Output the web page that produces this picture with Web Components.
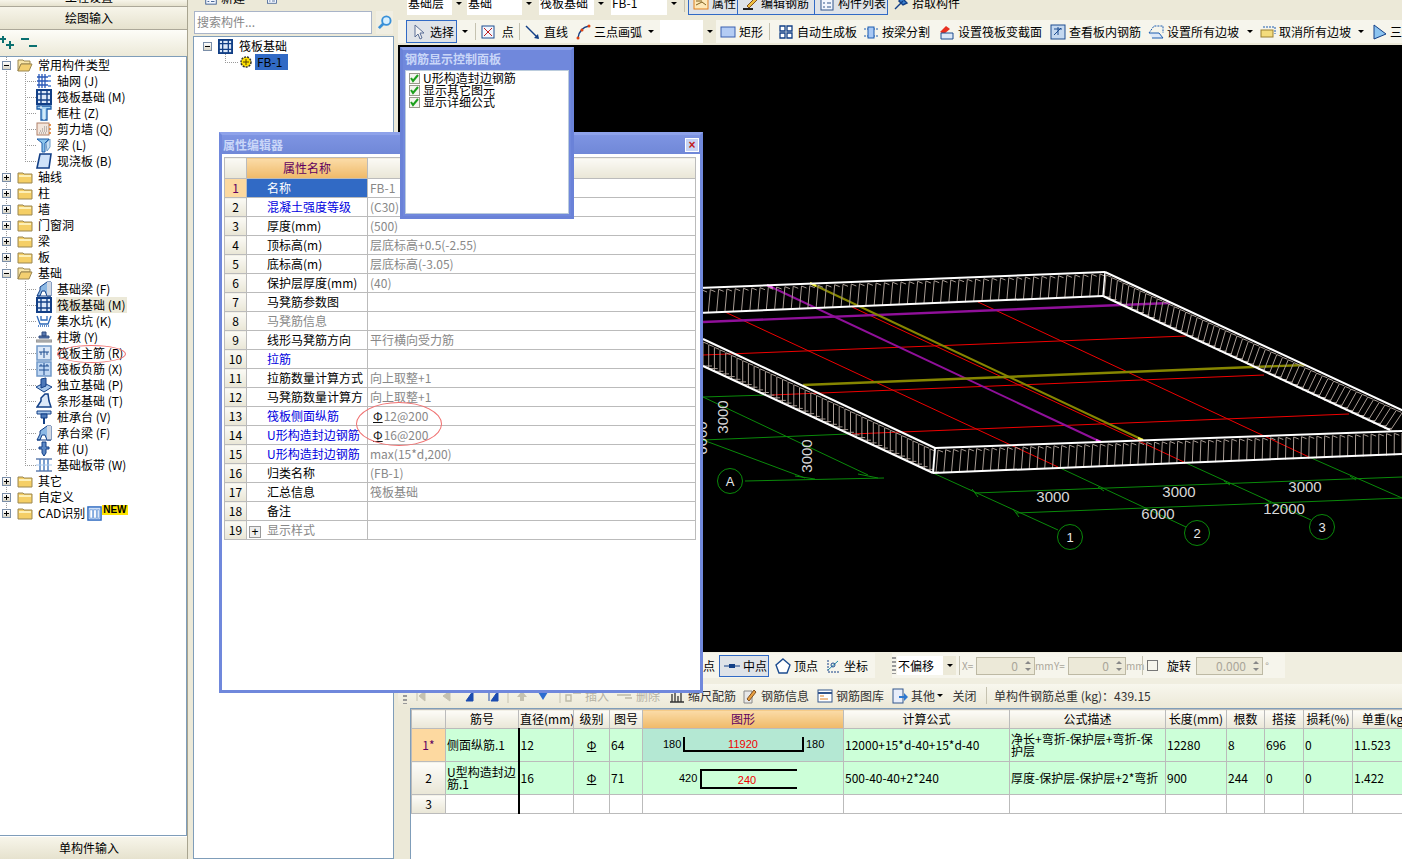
<!DOCTYPE html>
<html lang="zh">
<head>
<meta charset="utf-8">
<title>钢筋</title>
<style>
    html, body { margin: 0; height: 100%; overflow: hidden; background: #ece9d8; }
    body { font: 12px/16px "Noto Sans CJK SC", "Liberation Sans", sans-serif; color: #000; }
</style>
</head>
<body>
<app-shell>
    <side-panel slot="left">
        <tree-row level="0" open icon="folderopen">常用构件类型</tree-row>
        <tree-row level="1" icon="grid">轴网 (J)</tree-row>
        <tree-row level="1" icon="raft">筏板基础 (M)</tree-row>
        <tree-row level="1" icon="column">框柱 (Z)</tree-row>
        <tree-row level="1" icon="wall">剪力墙 (Q)</tree-row>
        <tree-row level="1" icon="beam">梁 (L)</tree-row>
        <tree-row level="1" last icon="slab">现浇板 (B)</tree-row>
        <tree-row level="0" icon="folder">轴线</tree-row>
        <tree-row level="0" icon="folder">柱</tree-row>
        <tree-row level="0" icon="folder">墙</tree-row>
        <tree-row level="0" icon="folder">门窗洞</tree-row>
        <tree-row level="0" icon="folder">梁</tree-row>
        <tree-row level="0" icon="folder">板</tree-row>
        <tree-row level="0" open icon="folderopen">基础</tree-row>
        <tree-row level="1" icon="fbeam">基础梁 (F)</tree-row>
        <tree-row level="1" selected icon="raft">筏板基础 (M)</tree-row>
        <tree-row level="1" icon="sump">集水坑 (K)</tree-row>
        <tree-row level="1" icon="pier">柱墩 (Y)</tree-row>
        <tree-row level="1" ring icon="rmain">筏板主筋 (R)</tree-row>
        <tree-row level="1" icon="rneg">筏板负筋 (X)</tree-row>
        <tree-row level="1" icon="iso">独立基础 (P)</tree-row>
        <tree-row level="1" icon="strip">条形基础 (T)</tree-row>
        <tree-row level="1" icon="cap">桩承台 (V)</tree-row>
        <tree-row level="1" icon="fbeam">承台梁 (F)</tree-row>
        <tree-row level="1" icon="pile">桩 (U)</tree-row>
        <tree-row level="1" last icon="band">基础板带 (W)</tree-row>
        <tree-row level="0" icon="folder">其它</tree-row>
        <tree-row level="0" icon="folder">自定义</tree-row>
        <tree-row level="0" end icon="folder" badge>CAD识别</tree-row>
    </side-panel>
    <part-list slot="middle"></part-list>
    <main-area slot="right"></main-area>
</app-shell>
<prop-dialog></prop-dialog>
<rebar-panel></rebar-panel>

<script>
const ICONS = {
    folder: '<path d="M1 4h5l1 1h8v9H1z" fill="#f5cf66" stroke="#9a8650"/><path d="M2 6h12v2H2z" fill="#fdf0b8"/>',
    folderopen: '<path d="M1 3h5l1 1h6v3H4l-3 7z" fill="#f9e6a8" stroke="#9a8650"/><path d="M4 7h11l-3 7H1z" fill="#f3cf70" stroke="#9a8650"/>',
    grid: '<path d="M3 1v14M6 1v14M9 1v14M1 4h11M1 8h11M1 12h11" stroke="#2858b8" stroke-width="1.3" fill="none"/><path d="M12 2h3v2h-3zM12 7h3v2h-3zM12 12h3v2h-3z" fill="#78a0e0"/>',
    raft: '<rect x="1" y="1" width="14" height="14" fill="#dce8f8" stroke="#123f86" stroke-width="2"/><path d="M5 1v14M11 1v14M1 5h14M1 11h14" stroke="#123f86" stroke-width="1.4"/>',
    column: '<path d="M1 1h14v3H11v11H5V4H1z" fill="#a8d4f2" stroke="#1c5ca8" stroke-width="1.3"/><path d="M5 1v3M8 4v11" stroke="#fff"/>',
    wall: '<rect x="1" y="2" width="12" height="12" fill="#f4e6dc" stroke="#b08068"/><path d="M3 12h8M4 10h7M6 8h5M8 6h3" stroke="#888" stroke-dasharray="1 1"/><path d="M13 4h2M13 8h2M13 12h2" stroke="#e07820" stroke-width="1.4"/>',
    beam: '<path d="M1 2h12l-4 4v9H6V6z" fill="#8cc4ec" stroke="#1c5ca8"/><path d="M10 6l4-4v8l-3 4z" fill="#c8e0f4" stroke="#6c9cc8"/>',
    slab: '<path d="M4 1h11l-2 14H1z" fill="#cfe2f8" stroke="#123f86" stroke-width="1.6"/>',
    fbeam: '<path d="M1 15l3-6V6l7-5h4v14h-4l-2-5H6l-2 5z" fill="#8cb8e4" stroke="#123f86"/><path d="M11 1h4v14h-4z" fill="#d0d8e4"/><path d="M1 15h14" stroke="#123f86"/>',
    sump: '<path d="M1 3l3 8h8l3-8M5 3v4h6V3" fill="none" stroke="#2c68b8" stroke-width="1.3"/><path d="M2 13h12" stroke="#2c68b8" stroke-dasharray="1 1" stroke-width="1.5"/>',
    pier: '<path d="M6 3h4v4H6zM3 7h10v2H3z" fill="#5878b0" stroke="#304c80"/><path d="M0 11h16v2H0z" fill="#c8c8c8" stroke="#888"/>',
    rmain: '<rect x="1" y="1" width="14" height="14" fill="#dce8f8" stroke="#7098c8" stroke-width="1.5"/><path d="M8 3v10M3 7h10M5 7v3M11 7v3" stroke="#1c4c90" fill="none"/>',
    rneg: '<rect x="1" y="1" width="14" height="14" fill="#c0d8f4" stroke="#7098c8" stroke-width="1.5"/><path d="M8 2v12M3 5h10M3 9h10M5 3v2M11 3v2" stroke="#1c4c90" fill="none"/>',
    iso: '<path d="M0 10l8-4 8 4-8 5z" fill="#a8c8ec" stroke="#123f86"/><path d="M5 2l5-1v8l-5 2z" fill="#4c78b8" stroke="#123f86"/>',
    strip: '<path d="M1 14l4-6V5l4-4h3l1 7 2 6z" fill="#dce8f8" stroke="#123f86" stroke-width="1.5"/>',
    cap: '<path d="M1 2h14v3H1z" fill="#a8c8ec" stroke="#123f86"/><path d="M5 5h6v4H5z" fill="#4c78b8" stroke="#123f86"/><path d="M8 9v6" stroke="#123f86" stroke-width="2"/>',
    pile: '<path d="M6 1h4v5h3v2h-3v4l-2 3-2-3V8H3V6h3z" fill="#5c88c4" stroke="#123f86"/>',
    band: '<path d="M0 2h16M0 14h16" stroke="#123f86"/><path d="M4 2v12M8 2v12M12 2v12" stroke="#5080c0" stroke-width="1.5"/><path d="M0 8h16" stroke="#a8c8ec"/>',
    gear: '<circle cx="8" cy="8" r="5" fill="#ffe000" stroke="#333" stroke-dasharray="2 1" stroke-width="1.5"/><path d="M5 8h6M8 5v6" stroke="#554400"/>',
    cadi: '<rect x="1" y="1" width="14" height="14" fill="#cfe0f8" stroke="#2c68c0" stroke-width="1.5"/><path d="M3 4h3v9H3zM7 4h3v9H7zM11 4h2v9h-2z" fill="#fff" stroke="#5088d0" stroke-width=".7"/>',
    pointer: '<path d="M4 1v12l3-3 2 5 2-1-2-5h4z" fill="#f2f2f2" stroke="#5a6e96"/>',
    point: '<rect x="2" y="2" width="12" height="12" fill="#f2f6fe" stroke="#1c4c90"/><path d="M4 4l8 8M12 4l-8 8" stroke="#c02020"/>',
    line: '<path d="M1 2l12 12" stroke="#123f86" stroke-width="1.4"/><path d="M14 15l-5-1 4-4z" fill="#123f86"/>',
    arc: '<path d="M3 14C4 7 8 3 14 2" stroke="#123f86" stroke-width="1.4" fill="none"/><circle cx="3" cy="14" r="1.5" fill="#e04010"/><circle cx="7" cy="6" r="1.5" fill="#e04010"/><circle cx="14" cy="2" r="1.5" fill="#e04010"/>',
    rect: '<rect x="1" y="3" width="14" height="10" fill="#b4ccf4" stroke="#3a60b0"/>',
    auto: '<path d="M2 2h5v5H2zM9 2h5v5H9zM2 9h5v5H2zM9 9h5v5H9z" fill="#fff" stroke="#123f86" stroke-width="1.3"/>',
    split: '<path d="M1 5h14M1 12h14" stroke="#1c5cb0" stroke-dasharray="2 1"/><rect x="5" y="3" width="6" height="11" fill="#a8c8f4" stroke="#1c5cb0"/>',
    setvar: '<path d="M1 8l6-6 4 3-6 5z" fill="#e83020"/><path d="M2 9h12v6H2z" fill="#dce8f8" stroke="#1c4c90"/>',
    board: '<rect x="1" y="1" width="14" height="14" fill="#c4d8f0" stroke="#1c4c90"/><path d="M4 5h8M8 3v8M4 11l7-7" stroke="#1c4c90"/>',
    slope: '<path d="M1 9l5-7h9v7" fill="none" stroke="#1c5cb0" stroke-dasharray="2 1"/><path d="M1 9h10l4 5H4" fill="#dce8f8" stroke="#1c5cb0"/>',
    noslope: '<rect x="1" y="6" width="12" height="7" fill="#f4dc7c" stroke="#9a8030"/><path d="M3 3h12v7" fill="none" stroke="#1c5cb0" stroke-dasharray="2 1"/>',
    tri: '<path d="M3 1v14l12-5z" fill="#8cc4f0" stroke="#123f86"/>',
    prop: '<rect x="1" y="2" width="14" height="12" fill="#fde8b8" stroke="#e08020"/><path d="M3 6h6M3 10l6-3 4 3" stroke="#806020" fill="none"/>',
    edit: '<path d="M1 14h10" stroke="#222" stroke-width="2"/><path d="M5 11l8-8 2 2-8 8z" fill="#f0c040" stroke="#805020"/>',
    list: '<rect x="2" y="1" width="12" height="14" fill="#f2f6fe" stroke="#33568c"/><path d="M4 4h2M8 4h4M4 8h2M8 8h4M4 12h2M8 12h4" stroke="#33568c"/>',
    pick: '<path d="M2 14l8-8M8 2l6 6-4 2-4-4z" fill="#3a80d0" stroke="#123f86" stroke-width="1.4"/>',
    mid: '<path d="M0 8h16" stroke="#123f86"/><rect x="5" y="6" width="6" height="4" fill="#123f86"/>',
    vertex: '<path d="M8 1l7 6-3 8H4L1 7z" fill="#fff" stroke="#1c4c90" stroke-width="1.4"/>',
    coord: '<path d="M3 2v12h12" fill="none" stroke="#123f86" stroke-dasharray="2 1"/><path d="M3 12L13 3" stroke="#1c8ca8"/><circle cx="8" cy="7" r="2" fill="none" stroke="#1c4c90"/>',
    info: '<path d="M2 3h8v12H2z" fill="#e8e8e8" stroke="#888"/><path d="M5 11l7-9 2 2-7 9z" fill="#e8a040" stroke="#805020"/>',
    lib: '<rect x="1" y="2" width="14" height="12" fill="#fff" stroke="#33568c"/><path d="M1 5h14" stroke="#33568c" stroke-width="2"/><path d="M3 8h4M3 11h8" stroke="#e08020"/>',
    other: '<rect x="1" y="1" width="10" height="14" fill="#e8eefa" stroke="#33568c"/><path d="M7 8h5V5l4 4-4 4v-3H7z" fill="#2c78d0"/>',
    scale: '<path d="M1 14h14M3 14V6M6 14V3M9 14V8M12 14V5" stroke="#333" stroke-width="1.3"/>',
    search: '<circle cx="10" cy="6" r="4.5" fill="#d8f0ff" stroke="#3890d8" stroke-width="2"/><path d="M7 9l-5 5" stroke="#3890d8" stroke-width="3"/>'
};

function icon(name, size = 16) {
    return `<svg width="${size}" height="${size}" viewBox="0 0 16 16" style="flex:none;display:block">${ICONS[name] || ''}</svg>`;
}

class AppShell extends HTMLElement {
    constructor() {
        super();
        this.attachShadow({mode: 'open'});
        this.shadowRoot.innerHTML = `
            <style>
                :host { display: grid; grid-template-columns: 188px 202px 1004px; column-gap: 4px; width: 1402px; height: 859px; overflow: hidden; }
                ::slotted([slot="middle"]) { margin-left: 1px; }
            </style>
            <slot name="left"></slot>
            <slot name="middle"></slot>
            <slot name="right"></slot>
        `;
    }
}

class SidePanel extends HTMLElement {
    constructor() {
        super();
        this.attachShadow({mode: 'open'});
        this.shadowRoot.innerHTML = `
            <style>
                :host { display: flex; flex-direction: column; height: 859px; border-right: 1px solid #a8a490; box-sizing: border-box; }
                .tab { height: 23px; line-height: 22px; text-align: center; box-sizing: border-box; flex: none; padding-right: 9px;
                    background: linear-gradient(#f7f5ea, #e6e2ce); border-bottom: 1px solid #aca899; }
                .cut { height: 7px; overflow: hidden; }
                .cut span { display: block; margin-top: -14px; }
                .tools { height: 26px; flex: none; display: flex; gap: 5px; align-items: center; padding: 0 0 2px 0;
                    background: linear-gradient(#fdfdf8, #ece9d8); box-sizing: border-box; }
                .box { flex: 1; border: 1px solid #7f9db9; border-left: 0; background: #fff; overflow: hidden; min-height: 0; }
            </style>
            <div class="tab cut"><span>工程设置</span></div>
            <div class="tab">绘图输入</div>
            <div class="tools">
                <svg width="15" height="15" viewBox="0 0 15 15"><path d="M3 1v7M0 4h6M10 6v8M6 10h8" stroke="#0a7070" stroke-width="2"/></svg>
                <svg width="18" height="15" viewBox="0 0 18 15"><path d="M1 4h8M9 11h8" stroke="#0a7070" stroke-width="2"/></svg>
            </div>
            <div class="box"><slot></slot></div>
            <div class="tab" style="border-top:1px solid #fff;border-bottom:0">单构件输入</div>
        `;
    }
}

class TreeRow extends HTMLElement {
    constructor() {
        super();
        this.attachShadow({mode: 'open'});
    }

    connectedCallback() {
        const level = this.getAttribute('level');
        const dot = 'repeating-linear-gradient(to bottom,#999 0 1px,transparent 1px 2px)';
        const dash = 'repeating-linear-gradient(to right,#999 0 1px,transparent 1px 2px)';
        let bg = `${dot} 6px 0/1px ${this.hasAttribute('end') ? '8px' : '100%'} no-repeat`;
        if (level === '1') {
            bg += `,${dot} 25px 0/1px ${this.hasAttribute('last') ? '8px' : '100%'} no-repeat,${dash} 25px 8px/11px 1px no-repeat`;
        }
        const box = level === '0' ? `<span class="exp">${this.hasAttribute('open') ? '' : '<i></i>'}</span>` : '';
        this.shadowRoot.innerHTML = `
            <style>
                :host { display: flex; align-items: center; height: 16px; background: ${bg}; white-space: nowrap; position: relative; }
                .exp { width: 9px; height: 9px; margin: 0 6px 0 2px; flex: none; border: 1px solid #7a8ea8; box-sizing: border-box;
                    background: linear-gradient(#fff, #d8d4c4); }
                .exp::before { content: ""; display: block; height: 1px; margin: 3px 1px 0; background: #000; }
                .exp i { display: block; width: 1px; height: 5px; background: #000; margin: -3px 0 0 3px; }
                .ind { width: 36px; flex: none; }
                .lab { margin-left: 4px; padding: 0 1px; }
                :host([selected]) .lab { background: #ece9d8; }
                .ring { position: absolute; left: 57px; top: 0; width: 69px; height: 18px; border: 1px solid #f07070; border-radius: 50%; box-sizing: border-box; }
                .cad { margin-left: 1px; }
                .new { font: bold 10px/10px "Liberation Sans", sans-serif; color: #000; background: #ffe400; padding: 0 1px; align-self: flex-start; }
            </style>
            ${box}${level === '1' ? '<span class="ind"></span>' : ''}
            ${icon(this.getAttribute('icon'), 16)}
            <span class="lab"><slot></slot></span>
            ${this.hasAttribute('ring') ? '<span class="ring"></span>' : ''}
            ${this.hasAttribute('badge') ? `<span class="cad">${icon('cadi', 15)}</span><span class="new">NEW</span>` : ''}
        `;
    }
}

class PartList extends HTMLElement {
    constructor() {
        super();
        this.attachShadow({mode: 'open'});
        this.shadowRoot.innerHTML = `
            <style>
                :host { display: flex; flex-direction: column; height: 859px; }
                .top { height: 11px; flex: none; overflow: hidden; }
                .top div { display: flex; align-items: center; gap: 3px; margin-top: -10px; padding-left: 11px; height: 16px; }
                .find { display: flex; height: 23px; flex: none; align-items: stretch; gap: 4px; padding-left: 1px; }
                .input { width: 174px; border: 1px solid #a9b4c8; background: #fff; color: #888; line-height: 19px; padding-left: 2px; height: 21px; }
                .go { width: 17px; display: flex; align-items: center; justify-content: center; background: #f0eee2; }
                .box { flex: 1; margin-top: 2px; border: 1px solid #7f9db9; background: #fff; padding: 1px 0 0 7px; }
                .row { display: flex; align-items: center; height: 16px; gap: 6px; }
                .exp { width: 9px; height: 9px; border: 1px solid #7a8ea8; box-sizing: border-box; background: linear-gradient(#fff, #d8d4c4); margin-left: 2px; }
                .exp::before { content: ""; display: block; height: 1px; margin: 3px 1px 0; background: #000; }
                .sub { padding-left: 37px; gap: 1px;
                    background: repeating-linear-gradient(to right,#999 0 1px,transparent 1px 2px) 24px 8px/13px 1px no-repeat,
                        repeating-linear-gradient(to bottom,#999 0 1px,transparent 1px 2px) 24px 0/1px 8px no-repeat; }
                .sub span { background: #316ac5; color: #000; padding: 0 6px 0 2px; }
            </style>
            <div class="top"><div>${icon('list', 14)}<span style="width:42px">新建</span>${icon('list', 12)}</div></div>
            <div class="find">
                <div class="input">搜索构件...</div>
                <div class="go">${icon('search', 15)}</div>
            </div>
            <div class="box">
                <div class="row"><i class="exp"></i>${icon('raft', 15)}<b style="font-weight:400">筏板基础</b></div>
                <div class="row sub">${icon('gear', 16)}<span>FB-1</span></div>
            </div>
        `;
    }
}

class ToolItem extends HTMLElement {
    constructor() {
        super();
        this.attachShadow({mode: 'open'});
    }

    connectedCallback() {
        const w = this.getAttribute('w');
        const name = this.getAttribute('icon');
        this.shadowRoot.innerHTML = `
            <style>
                :host { display: flex; align-items: center; gap: 3px; box-sizing: border-box; height: 100%; padding: 0 2px; white-space: nowrap; flex: none; overflow: hidden; ${w ? `width:${w}px;` : ''} }
                :host([active]) { background: #dfe3e8; border: 1px solid #316ac5; padding: 0 4px; }
                :host([center]) { justify-content: center; }
            </style>
            ${name ? icon(name) : ''}<slot></slot>
        `;
    }
}

class ToolCaret extends HTMLElement {
    constructor() {
        super();
        this.attachShadow({mode: 'open'});
        this.shadowRoot.innerHTML = `
            <style>
                :host { display: flex; align-items: center; justify-content: center; flex: none; height: 100%; width: var(--w, 15px); }
                i { width: 0; height: 0; border: 3px solid transparent; border-top: 3px solid #000; border-bottom: 0; }
            </style><i></i>
        `;
    }
}

class ToolSep extends HTMLElement {
    constructor() {
        super();
        this.attachShadow({mode: 'open'});
        this.shadowRoot.innerHTML = `
            <style>
                :host { display: flex; justify-content: center; flex: none; height: 100%; width: var(--w, 7px); }
                i { width: 1px; background: #c5c2b0; margin: 3px 0; }
            </style><i></i>
        `;
    }
}

class ComboBox extends HTMLElement {
    constructor() {
        super();
        this.attachShadow({mode: 'open'});
    }

    connectedCallback() {
        this.shadowRoot.innerHTML = `
            <style>
                :host { display: flex; flex: none; height: 100%; background: #fff; width: ${this.getAttribute('w')}px; box-sizing: border-box; align-items: center; padding-left: 1px; margin: 0 ${this.getAttribute('mr') || 0}px 0 ${this.getAttribute('ml') || 0}px; }
                span { flex: 1; white-space: nowrap; overflow: hidden; }
                b { width: 13px; height: 100%; background: #ece9d8; display: flex; align-items: center; justify-content: center; }
                i { width: 0; height: 0; border: 3px solid transparent; border-top: 3px solid #000; border-bottom: 0; }
            </style>
            <span><slot></slot></span><b><i></i></b>
        `;
    }
}

class SpinBox extends HTMLElement {
    constructor() {
        super();
        this.attachShadow({mode: 'open'});
    }

    connectedCallback() {
        this.shadowRoot.innerHTML = `
            <style>
                :host { display: flex; flex: none; width: ${this.getAttribute('w')}px; height: 18px; border: 1px solid #bdb9a4; box-sizing: border-box; color: #aaa69a; align-items: center; background: #ece9d8; }
                span { flex: 1; text-align: right; padding-right: 3px; }
                b { width: 13px; display: flex; flex-direction: column; gap: 4px; align-items: center; }
                i { width: 0; height: 0; border: 3px solid transparent; border-bottom: 3px solid #888; border-top: 0; }
                i + i { border-bottom: 0; border-top: 3px solid #888; }
            </style>
            <span><slot></slot></span><b><i></i><i></i></b>
        `;
    }
}

class MainArea extends HTMLElement {
    constructor() {
        super();
        this.attachShadow({mode: 'open'});
        this.shadowRoot.innerHTML = `
            <style>
                :host { display: flex; flex-direction: column; height: 859px; width: 1004px; overflow: hidden; }
                .bar { display: flex; align-items: center; flex: none; white-space: nowrap; }
                .r1 { height: 24px; margin-top: -9px; padding-left: 9px; }
                .r2 { height: 23px; margin-top: 5px; padding-left: 8px; background: #f6f5ec; }
                .r3 { height: 32px; background: #f0eee0; padding: 1px 0 6px; box-sizing: border-box; }
                .r4 { height: 23px; background: linear-gradient(#f8f7ee, #ece9d8); padding-left: 5px; color: #333; }
                .grip { width: 4px; height: 17px; flex: none; background: repeating-linear-gradient(to bottom,#999 0 2px,transparent 2px 4px); }
                .snap { height: 25px; display: flex; align-items: center; background: #f6f5ec; flex: none; }
                .snap tool-item { height: 22px; }
                .dim { color: #aaa69a; flex: none; font-size: 10px; }
                .box { width: 11px; height: 11px; border: 1px solid #777; flex: none; box-sizing: border-box; margin-left: 2px; }
                .faded { color: #b5b2a4; flex: none; }
                cad-view { flex: none; margin-top: 2px; }
                rebar-table { margin: 1px 0 0 12px; flex: 1; min-height: 0; }
            </style>
            <div class="bar r1">
                <combo-box w="58" mr="2">基础层</combo-box>
                <combo-box w="68" mr="4">基础</combo-box>
                <combo-box w="68" mr="4">筏板基础</combo-box>
                <combo-box w="69">FB-1</combo-box>
                <tool-sep style="--w:8px"></tool-sep>
                <tool-item w="50" active icon="prop">属性</tool-item>
                <tool-item w="77" active icon="edit" style="border-left:0">编辑钢筋</tool-item>
                <tool-item w="73" active icon="list" style="border-left:0">构件列表</tool-item>
                <tool-item w="78" style="margin-left:3px" icon="pick">拾取构件</tool-item>
            </div>
            <div class="bar r2">
                <tool-item w="51" active icon="pointer">选择</tool-item>
                <tool-caret></tool-caret>
                <tool-sep style="--w:6px"></tool-sep>
                <tool-item w="38" icon="point">&nbsp;点</tool-item>
                <tool-sep></tool-sep>
                <tool-item w="50" icon="line">直线</tool-item>
                <tool-item w="70" icon="arc">三点画弧</tool-item>
                <tool-caret></tool-caret>
                <combo-box w="56" ml="2" mr="2"></combo-box>
                <tool-item w="45" icon="rect">矩形</tool-item>
                <tool-sep style="--w:13px"></tool-sep>
                <tool-item w="85" icon="auto">自动生成板</tool-item>
                <tool-item w="76" icon="split">按梁分割</tool-item>
                <tool-item w="111" icon="setvar">设置筏板变截面</tool-item>
                <tool-item w="98" icon="board">查看板内钢筋</tool-item>
                <tool-item w="96" icon="slope">设置所有边坡</tool-item>
                <tool-caret style="--w:16px"></tool-caret>
                <tool-item w="95" icon="noslope">取消所有边坡</tool-item>
                <tool-caret style="--w:16px"></tool-caret>
                <tool-item w="40" icon="tri">三</tool-item>
            </div>
            <cad-view></cad-view>
            <div class="bar r3">
                <div class="snap" style="padding-left:303px">
                    <tool-item w="18">点</tool-item>
                    <tool-item w="50" active icon="mid">中点</tool-item>
                    <tool-item w="46" style="margin-left:4px" icon="vertex">顶点</tool-item>
                    <tool-item w="52" style="margin-left:4px" icon="coord">坐标</tool-item>
                </div>
                <div class="snap" style="margin-left:17px;padding-right:16px">
                    <span class="grip" style="margin-right:1px"></span>
                    <combo-box w="59" style="height:19px">不偏移</combo-box>
                    <tool-sep style="--w:6px"></tool-sep>
                    <span class="dim" style="width:14px">X=</span>
                    <spin-box w="59">0</spin-box>
                    <span class="dim" style="width:19px">mm</span>
                    <span class="dim" style="width:14px">Y=</span>
                    <spin-box w="58">0</spin-box>
                    <span class="dim" style="width:14px">mm</span>
                    <tool-sep style="--w:5px"></tool-sep>
                    <span class="box"></span>
                    <span style="margin:0 5px 0 9px;flex:none">旋转</span>
                    <spin-box w="67">0.000</spin-box>
                    <span class="dim">&nbsp;°</span>
                </div>
            </div>
            <div class="bar r4">
                <span class="grip"></span>
                <svg width="158" height="14" viewBox="0 0 158 14" style="flex:none">
                    <path d="M10 2v10M12 7l6-5v10zM43 2v10l-7-5z" fill="#c4c1b0" stroke="#c4c1b0"/>
                    <path d="M59 12l7-10v10zM82 2v10M84 12l7-10v10z" fill="#1c4cb0" stroke="#1c4cb0"/>
                    <path d="M101 0v14" stroke="#c5c2b0"/>
                    <path d="M110 8l5-6 5 6h-3v4h-4V8z" fill="#c4c1b0"/>
                    <path d="M131 3h10l-5 8z" fill="#2c6cd0"/>
                    <path d="M153 0v14" stroke="#c5c2b0"/>
                </svg>
                <svg width="20" height="14" viewBox="0 0 20 14" style="flex:none"><path d="M1 6h5v6H1zM8 4h8" fill="none" stroke="#bdbaa8" stroke-width="1.4"/></svg>
                <span class="faded" style="width:31px">插入</span>
                <svg width="20" height="14" viewBox="0 0 20 14" style="flex:none"><path d="M1 6h14M9 9h7" fill="none" stroke="#bdbaa8" stroke-width="1.4"/></svg>
                <span class="faded" style="width:31px">删除</span>
                <tool-item w="73" icon="scale">缩尺配筋</tool-item>
                <tool-item w="75" icon="info">钢筋信息</tool-item>
                <tool-item w="75" icon="lib">钢筋图库</tool-item>
                <tool-item w="46" icon="other">其他</tool-item>
                <tool-caret style="--w:8px"></tool-caret>
                <tool-item w="41" center>关闭</tool-item>
                <tool-sep style="--w:3px"></tool-sep>
                <span style="margin-left:6px">单构件钢筋总重 (kg)：439.15</span>
            </div>
            <rebar-table></rebar-table>
        `;
    }
}

class CadView extends HTMLElement {
    constructor() {
        super();
        this.attachShadow({mode: 'open'});
    }

    connectedCallback() {
        const seg = (x1, y1, x2, y2, c, w = 1) => `<line x1="${x1}" y1="${y1}" x2="${x2}" y2="${y2}" stroke="${c}" stroke-width="${w}"/>`;
        const green = '#0a8a0a', red = '#f00000', white = '#fff', purple = '#90109a', olive = '#868600';

        // thin posts between two slab edges, each with a short serif at its top
        const hatch = (a, b, c, d, n, tick) => {
            let out = '';
            for (let i = 0; i <= n; i++) {
                const t = i / n;
                const x1 = a[0] + (b[0] - a[0]) * t, y1 = a[1] + (b[1] - a[1]) * t;
                const x2 = c[0] + (d[0] - c[0]) * t, y2 = c[1] + (d[1] - c[1]) * t;
                out += `M${(x1 + 5).toFixed(1)} ${(y1 + 2).toFixed(1)}L${x1.toFixed(1)} ${y1.toFixed(1)}L${x2.toFixed(1)} ${y2.toFixed(1)}`;
                if (tick) out += `L${(x2 + tick).toFixed(1)} ${y2.toFixed(1)}`;
            }
            return `<path d="${out}" fill="none" stroke="#a89c94" stroke-width="1"/>`;
        };

        const label = (x, y, t, rot) => `<text x="${x}" y="${y}" fill="#d8d8d8" font-size="15" text-anchor="middle" ${rot ? `transform="rotate(-90 ${x} ${y})"` : ''}>${t}</text>`;
        const bubble = (x, y, t) => `<circle cx="${x}" cy="${y}" r="12.5" fill="#000" stroke="${green}"/><text x="${x}" y="${y + 5}" fill="#e8e8e8" font-size="13" text-anchor="middle">${t}</text>`;

        const parts = [
            seg(745, 481, 884, 478, green), seg(703, 397, 767, 395, green), seg(703, 440, 848, 434, green),
            seg(975, 493, 1402, 477, green), seg(1016, 513, 1402, 498, green),
            seg(703, 397, 868, 475, green), seg(703, 440, 805, 478, green),
            seg(933, 473, 1058, 530, green), seg(1058, 467, 1186, 527, green), seg(1186, 463, 1311, 520, green), seg(1309, 457, 1402, 498, green),
            seg(795, 476, 815, 479, green), seg(858, 474, 878, 478, green), seg(972, 489, 978, 497, green), seg(1013, 509, 1019, 517, green),
            seg(1098, 487, 1104, 491, green), seg(1224, 481, 1230, 485, green), seg(1350, 476, 1356, 480, green), seg(1265, 499, 1271, 503, green),
            seg(725, 312, 1058, 467, red), seg(852, 307, 1186, 463, red), seg(978, 302, 1309, 457, red),
            seg(703, 355, 1186, 336, red), seg(772, 395, 1264, 375, red), seg(852, 434, 1349, 414, red),
            seg(767, 285, 1101, 442, purple, 2), seg(703, 322, 1170, 303, purple, 2.4),
            seg(810, 283, 1143, 440, olive, 2), seg(803, 385, 1305, 365, olive, 2.4),
            seg(767, 285, 773, 288, '#f060f0', 2), seg(1096, 440, 1101, 442, '#f060f0', 2), seg(810, 283, 816, 286, '#f0f040', 2), seg(1138, 438, 1143, 440, '#f0f040', 2),
            hatch([702, 290], [1100, 274], [700, 313], [1098, 297], 48),
            hatch([1106, 275], [1402, 413], [1104, 297], [1390, 431], 52, 7),
            hatch([938, 450], [1402, 433], [936, 473], [1402, 455], 60),
            hatch([703, 342], [930, 449], [703, 366], [930, 472], 40, 9),
            seg(698, 288, 1105, 272, white, 2), seg(698, 313, 1103, 296, white, 2),
            seg(1105, 272, 1404, 411, white, 2), seg(1103, 296, 1390, 430, white, 2),
            seg(703, 339, 935, 448, white, 2), seg(703, 366, 933, 473, white, 2),
            seg(935, 448, 1402, 431, white, 2), seg(933, 473, 1402, 454, white, 2),
            seg(935, 448, 933, 473, white, 2), seg(1105, 272, 1103, 296, white, 1.4),
            label(1053, 502, '3000'), label(1179, 497, '3000'), label(1305, 492, '3000'),
            label(1158, 519, '6000'), label(1284, 514, '12000'),
            label(728, 417, '3000', true), label(812, 456, '3000', true), label(707, 438, '6000', true),
            bubble(730, 481, 'A'), bubble(1070, 537, '1'), bubble(1197, 533, '2'), bubble(1322, 527, '3')
        ];

        this.shadowRoot.innerHTML = `
            <style>
                :host { display: block; width: 1004px; height: 607px; background: #000; }
                svg { display: block; font-family: "Liberation Sans", sans-serif; }
            </style>
            <svg width="1004" height="607" viewBox="398 45 1004 607">${parts.join('')}</svg>
        `;
    }
}

class PropDialog extends HTMLElement {
    constructor() {
        super();
        this.attachShadow({mode: 'open'});
        this.rows = [
            ['名称', 'FB-1', 's'], ['混凝土强度等级', '(C30)', 'b'], ['厚度(mm)', '(500)'], ['顶标高(m)', '层底标高+0.5(-2.55)'],
            ['底标高(m)', '层底标高(-3.05)'], ['保护层厚度(mm)', '(40)'], ['马凳筋参数图', ''], ['马凳筋信息', '', 'g'],
            ['线形马凳筋方向', '平行横向受力筋'], ['拉筋', '', 'b'], ['拉筋数量计算方式', '向上取整+1'], ['马凳筋数量计算方', '向上取整+1'],
            ['筏板侧面纵筋', '<u>Φ</u>12@200', 'b'], ['U形构造封边钢筋', '<u>Φ</u>16@200', 'b'], ['U形构造封边钢筋', 'max(15*d,200)', 'b'],
            ['归类名称', '(FB-1)'], ['汇总信息', '筏板基础'], ['备注', ''], ['显示样式', '', 'p']
        ];
    }

    connectedCallback() {
        const body = this.rows.map((r, i) => `
            <tr class="${r[2] || ''}">
                <th>${i + 1}</th>
                <td class="n">${r[2] === 'p' ? '<i>+</i>' : ''}${r[0]}</td>
                <td class="v">${r[1]}</td>
            </tr>`).join('');
        this.shadowRoot.innerHTML = `
            <style>
                :host { position: absolute; left: 219px; top: 132px; width: 484px; height: 561px; box-sizing: border-box; display: flex; flex-direction: column;
                    background: #fff; border: 3px solid #7088dc; border-top-color: #8ea2ea; }
                .title { height: 19px; flex: none; display: flex; align-items: center; justify-content: space-between; padding: 0 1px;
                    background: linear-gradient(#7e94e2, #7088d8); color: #c9d6f8; font-weight: 700; }
                .title b { width: 14px; height: 14px; background: #c8d4f4; color: #c02020; font: bold 12px/12px "Liberation Sans", sans-serif; text-align: center; border: 1px solid #fff; box-sizing: border-box; }
                .wrap { flex: 1; padding: 3px 4px 3px 2px; background: #fff; position: relative; overflow: hidden; }
                table { border-collapse: collapse; table-layout: fixed; width: 472px; }
                th, td { border: 1px solid #bbb; height: 18px; padding: 0; font-weight: 400; white-space: nowrap; overflow: hidden; line-height: 16px; }
                th { background: linear-gradient(#fbfaf5, #e9e6d6); text-align: center; }
                thead th { height: 20px; }
                thead .gold { background: linear-gradient(#fbdca8, #efb968); color: #600060; }
                .n { padding-left: 20px; }
                .v { padding-left: 2px; color: #888; }
                .v u { color: #111; text-decoration: underline; margin: 0 1px 0 3px; }
                .s .n { background: #316ac5; color: #fff; }
                .s th { background: #fdd9a0; color: #600060; }
                .b .n { color: #0000e0; }
                .g .n, .p .n { color: #888; }
                .p .n { padding-left: 2px; }
                .p i { display: inline-block; width: 12px; height: 12px; border: 1px solid #999; color: #000; font: 12px/10px "Liberation Sans", sans-serif; text-align: center; margin-right: 6px; box-sizing: border-box; background: #eee; vertical-align: -1px; }
                .ring { position: absolute; left: 134px; top: 248px; width: 86px; height: 44px; border: 1px solid #f07070; border-radius: 50%; box-sizing: border-box; }
            </style>
            <div class="title">属性编辑器<b>×</b></div>
            <div class="wrap">
                <table>
                    <colgroup><col style="width:22px"><col style="width:121px"><col></colgroup>
                    <thead><tr><th></th><th class="gold">属性名称</th><th></th></tr></thead>
                    <tbody>${body}</tbody>
                </table>
                <span class="ring"></span>
            </div>
        `;
    }
}

class RebarPanel extends HTMLElement {
    constructor() {
        super();
        this.attachShadow({mode: 'open'});
        const opts = ['U形构造封边钢筋', '显示其它图元', '显示详细公式'];
        this.shadowRoot.innerHTML = `
            <style>
                :host { position: absolute; left: 400px; top: 47px; width: 174px; height: 172px; box-sizing: border-box; display: flex; flex-direction: column;
                    background: #7088dc; border: 3px solid #6a82d8; border-top-color: #8ea2ea; padding: 0 2px 2px; }
                .title { height: 20px; flex: none; color: #c9d6f8; font-weight: 700; line-height: 18px; }
                .list { flex: 1; background: #fff; border: 1px solid #bcd; padding: 1px 0 0 3px; }
                .o { display: flex; align-items: center; gap: 3px; height: 12px; white-space: nowrap; line-height: 12px; }
                .c { width: 11px; height: 11px; box-sizing: border-box; border: 1px solid #9a9a8c; background: #f4f4ee; flex: none; }
                .c svg { display: block; }
            </style>
            <div class="title">钢筋显示控制面板</div>
            <div class="list">
                ${opts.map(t => `<div class="o"><span class="c"><svg width="9" height="9" viewBox="0 0 9 9"><path d="M1 4l2 3 5-6" fill="none" stroke="#1ca01c" stroke-width="2"/></svg></span>${t}</div>`).join('')}
            </div>
        `;
    }
}

class RebarTable extends HTMLElement {
    constructor() {
        super();
        this.attachShadow({mode: 'open'});
        const widths = [34, 73, 55, 36, 33, 201, 166, 156, 61, 38, 39, 49, 60];
        const heads = ['', '筋号', '直径(mm)', '级别', '图号', '图形', '计算公式', '公式描述', '长度(mm)', '根数', '搭接', '损耗(%)', '单重(kg'];
        const shape1 = `<svg width="201" height="32" viewBox="0 0 201 32"><text x="20" y="19" text-anchor="start">180</text><path d="M41 8v14h119V8" fill="none" stroke="#000" stroke-width="2"/><text x="100" y="19" fill="#f00000" text-anchor="middle">11920</text><text x="163" y="19">180</text></svg>`;
        const shape2 = `<svg width="201" height="32" viewBox="0 0 201 32"><text x="36" y="20">420</text><path d="M154 8H58v18h96" fill="none" stroke="#000" stroke-width="2"/><text x="104" y="22" fill="#f00000" text-anchor="middle">240</text></svg>`;
        this.shadowRoot.innerHTML = `
            <style>
                :host { display: block; background: #fff; border: 1px solid #7f9db9; border-right: 0; border-bottom: 0; overflow: hidden; }
                table { border-collapse: collapse; table-layout: fixed; width: ${widths.reduce((a, b) => a + b)}px; }
                th, td { border: 1px solid #bbb; padding: 0 1px; font-weight: 400; line-height: 12px; overflow: hidden; white-space: nowrap; }
                thead th { height: 18px; }
                th { background: linear-gradient(#fdfcf8, #e9e6d6); text-align: center; }
                th.gold { background: linear-gradient(#fbdca8, #efb968); color: #600060; }
                .on th { background: #fdd9a0; color: #600060; }
                .g td { background: #ccffd8; }
                .on td.shape { background: #b4e8d3; }
                td.shape { padding: 0; }
                td.shape svg { display: block; font: 11px "Liberation Sans", sans-serif; }
                .wrap { white-space: normal; }
                .c { text-align: center; }
                .bar { border-right: 2px solid #000; }
                u { text-decoration: underline; }
                .r1 td, .r1 th { height: 32px; }
                .r2 td, .r2 th { height: 32px; }
                .r3 td, .r3 th { height: 18px; }
            </style>
            <table>
                <colgroup>${widths.map(w => `<col style="width:${w}px">`).join('')}</colgroup>
                <thead><tr>${heads.map(h => `<th${h === '图形' ? ' class="gold"' : ''}>${h}</th>`).join('')}</tr></thead>
                <tbody>
                    <tr class="g on r1"><th>1*</th><td class="bar">侧面纵筋.1</td><td>12</td><td class="c"><u>Φ</u></td><td>64</td><td class="shape">${shape1}</td><td>12000+15*d-40+15*d-40</td><td class="wrap">净长+弯折-保护层+弯折-保护层</td><td>12280</td><td>8</td><td>696</td><td>0</td><td>11.523</td></tr>
                    <tr class="g r2"><th>2</th><td class="bar wrap">U型构造封边筋.1</td><td>16</td><td class="c"><u>Φ</u></td><td>71</td><td class="shape">${shape2}</td><td>500-40-40+2*240</td><td>厚度-保护层-保护层+2*弯折</td><td>900</td><td>244</td><td>0</td><td>0</td><td>1.422</td></tr>
                    <tr class="r3"><th>3</th><td class="bar"></td><td></td><td></td><td></td><td></td><td></td><td></td><td></td><td></td><td></td><td></td><td></td></tr>
                </tbody>
            </table>
        `;
    }
}

customElements.define('app-shell', AppShell);
customElements.define('side-panel', SidePanel);
customElements.define('tree-row', TreeRow);
customElements.define('part-list', PartList);
customElements.define('tool-item', ToolItem);
customElements.define('tool-caret', ToolCaret);
customElements.define('tool-sep', ToolSep);
customElements.define('combo-box', ComboBox);
customElements.define('spin-box', SpinBox);
customElements.define('cad-view', CadView);
customElements.define('main-area', MainArea);
customElements.define('prop-dialog', PropDialog);
customElements.define('rebar-panel', RebarPanel);
customElements.define('rebar-table', RebarTable);
</script>
</body>
</html>
